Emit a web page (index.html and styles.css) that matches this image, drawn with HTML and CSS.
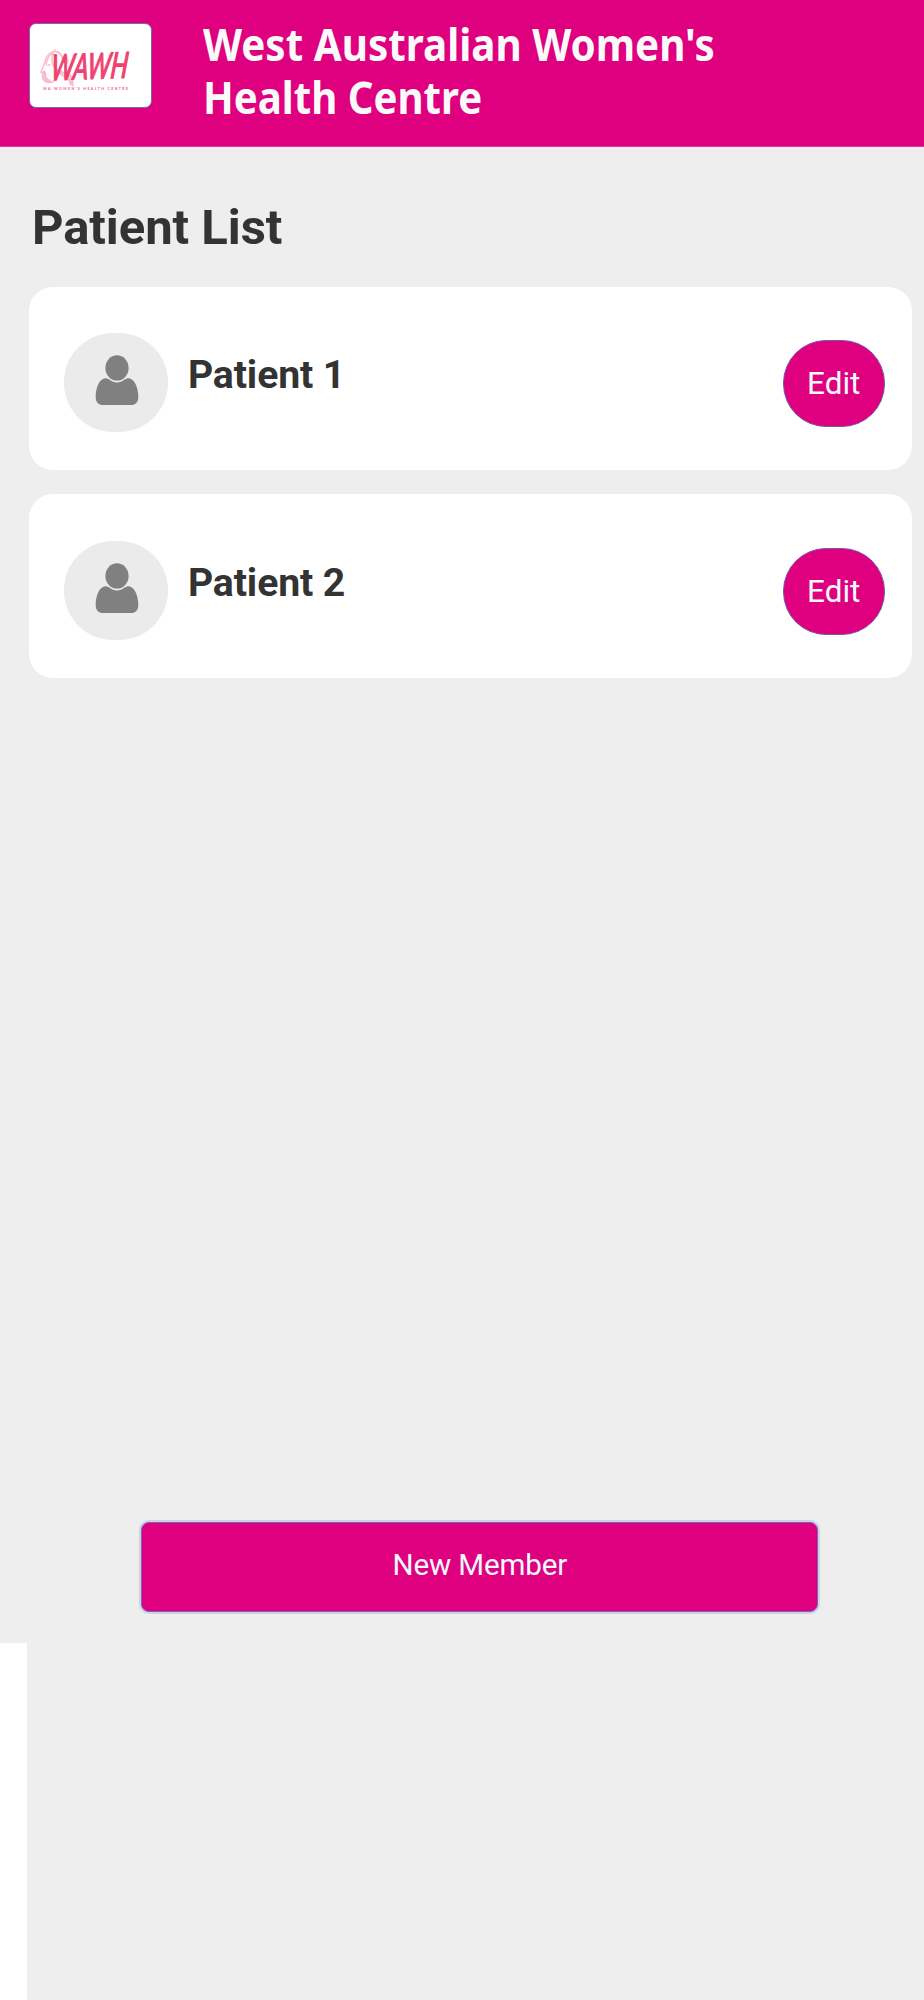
FILE: index.html
```html
<!DOCTYPE html>
<html lang="en">
<head>
<meta charset="utf-8">
<title>Patient List</title>
<link rel="stylesheet" href="styles.css">
</head>
<body>
<header class="header">
  <svg class="logo" viewBox="0 0 122 84" role="img" aria-label="WAWH">
    <g fill="none" stroke="#f9bccd" stroke-linecap="round">
      <path stroke-width="1.6" d="M23 28c-6 2-8 8-9 13-1 3-3 6-3 8l2 1c-1 3-1 6 2 8 4 2 7 1 9 0"/>
      <path stroke-width="4" d="M14 49c0 5 2 8 5 9"/>
      <path stroke-width="1.5" d="M16 41c1-6 3-9 6-11M18 42l2-1M25 26c-4 5-4 12-1 17"/>
      <path stroke-width="2" d="M27 46c3 6 13 8 16 16M31 48c7 3 9 6 10 13M36 48c5 3 7 8 7 12M26 28c4 0 6 4 7 8M35 31c2 2 3 5 3 8"/>
    </g>
    <text class="logo-word" transform="translate(20 57) rotate(-2) skewX(-8)" textLength="78" lengthAdjust="spacingAndGlyphs">WAWH</text>
    <text class="logo-tag" x="13" y="66.8" textLength="86">WA WOMEN'S HEALTH CENTRE</text>
  </svg>
  <h1 class="brand"><span class="brand-line">West Australian Women's</span><span class="brand-line brand-second">Health Centre</span></h1>
</header>
<main class="main">
  <h2 class="title">Patient List</h2>
  <section class="card">
    <div class="avatar"><svg viewBox="0 0 44 53" class="person"><ellipse cx="22" cy="12.9" rx="11.6" ry="12.7"/><path d="M11 23.3c3 0 5 4.1 11 4.1s8-4.1 11-4.1c6 0 10.3 8 10.3 19 0 5-3 7.8-7.4 7.8H8.1C3.7 50.1.7 47.3.7 42.3c0-11 4.3-19 10.3-19Z"/></svg></div>
    <h3 class="name">Patient 1</h3>
    <button class="edit">Edit</button>
  </section>
  <section class="card card-last">
    <div class="avatar"><svg viewBox="0 0 44 53" class="person"><ellipse cx="22" cy="12.9" rx="11.6" ry="12.7"/><path d="M11 23.3c3 0 5 4.1 11 4.1s8-4.1 11-4.1c6 0 10.3 8 10.3 19 0 5-3 7.8-7.4 7.8H8.1C3.7 50.1.7 47.3.7 42.3c0-11 4.3-19 10.3-19Z"/></svg></div>
    <h3 class="name">Patient 2</h3>
    <button class="edit">Edit</button>
  </section>
  <button class="new-member">New Member</button>
</main>
<footer class="below"></footer>
</body>
</html>
```
FILE: styles.css
```css
* { box-sizing: border-box; }
body {
  margin: 0;
  height: 2000px;
  display: flex;
  flex-direction: column;
  background: #eee;
  color: #333;
  font-family: Roboto, "Liberation Sans", sans-serif;
}
h1, h2, h3 { margin: 0; font-weight: 700; white-space: nowrap; }
button { font-family: inherit; color: #f0f8ff; background: #df0080; padding: 0; }
.header {
  height: 147px;
  flex: none;
  display: flex;
  align-items: flex-start;
  padding: 22.5px 0 0 29px;
  background: #df0080;
  border-bottom: 1px solid #e03a98;
}
.logo {
  width: 123px;
  height: 85px;
  flex: none;
  overflow: visible;
  background: #fff;
  border: 1px solid #7268b8;
  border-radius: 7px;
}
.logo-word { font: italic 400 36px Lato, sans-serif; fill: #ef426f; stroke: #ef426f; stroke-width: 1.3px; }
.logo-tag { font: 700 3.6px Lato, sans-serif; fill: #ef5c82; }
.brand {
  margin: -5px 0 0 51px;
  color: #fafafa;
  font: 700 44px/53.5px "Noto Sans", sans-serif;
}
.brand-line { display: block; width: max-content; transform: scaleX(.918); transform-origin: 0 50%; }
.brand-second { transform: scaleX(.913); }
.main { height: 1496px; flex: none; display: flex; flex-direction: column; padding: 52px 12.5px 0 29.4px; }
.title { height: 58px; margin: 0 0 30px 2.5px; font-size: 49px; line-height: 58px; letter-spacing: -.05px; }
.card {
  height: 183px;
  flex: none;
  display: flex;
  align-items: center;
  margin-bottom: 24px;
  padding: 9px 26.5px 0 35px;
  background: #fff;
  border-radius: 24px;
}
.card-last { height: 184px; padding-top: 10px; }
.avatar {
  width: 103.5px;
  height: 99.5px;
  display: flex;
  justify-content: center;
  margin-top: -1px;
  padding: 22.5px 0 0 1.5px;
  background: #ebebeb;
  border-radius: 49px;
}
.person { width: 44px; height: 53px; fill: #808080; }
.name { margin: -17px auto 0 20px; font-size: 39.2px; line-height: 46px; letter-spacing: -.1px; }
.edit {
  width: 102.5px;
  height: 87px;
  border: 1px solid #7a55ad;
  border-radius: 43px;
  font-size: 31.5px;
}
.new-member {
  width: 677px;
  height: 90px;
  margin: auto 0 31.5px 112px;
  padding-bottom: 3px;
  border: 1px solid #7c5fc0;
  border-radius: 8px;
  box-shadow: 0 0 0 2px #ccd4de;
  font-size: 29.6px;
  letter-spacing: -.15px;
}
.below { width: 27px; flex: 1; background: #fff; }
```
